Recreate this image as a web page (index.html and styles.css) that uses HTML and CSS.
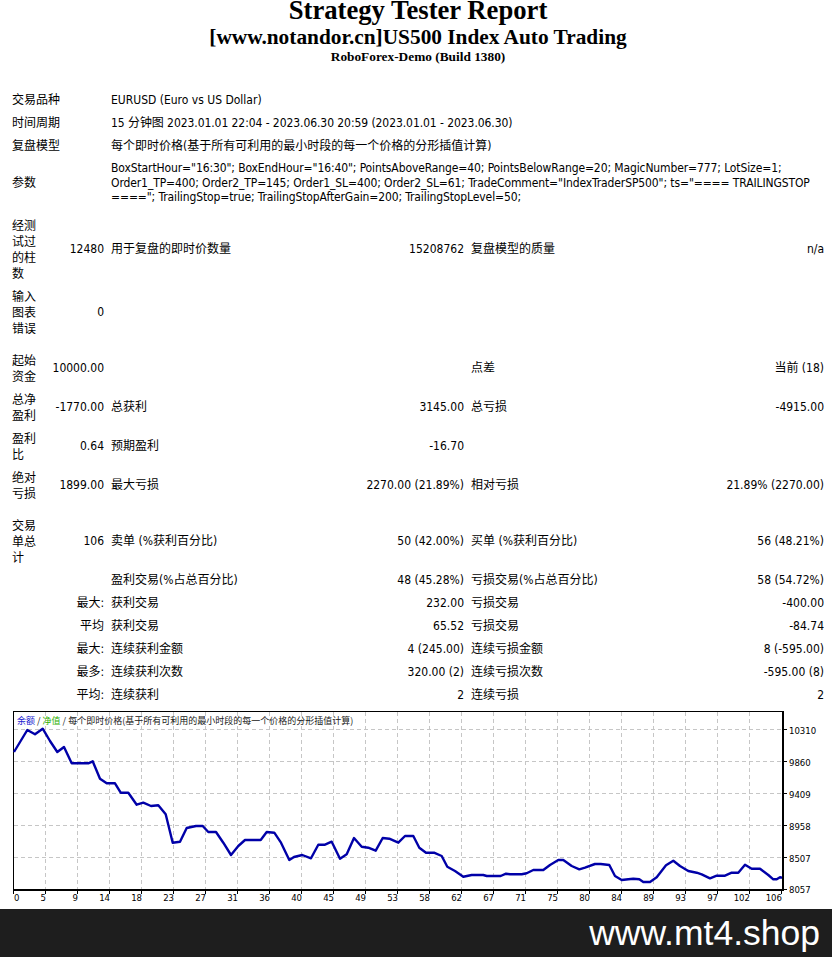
FILE: index.html
```html
<!DOCTYPE html>
<html lang="zh-CN">
<head>
<meta charset="utf-8">
<title>Strategy Tester Report</title>
<link rel="stylesheet" href="styles.css">
</head>
<body>
<div class="page">
  <header class="report-head">
    <div class="title">Strategy Tester Report</div>
    <div class="subtitle">[www.notandor.cn]US500 Index Auto Trading</div>
    <div class="server">RoboForex-Demo (Build 1380)</div>
  </header>

  <table class="stats">
    <colgroup>
      <col class="w1"><col class="w2"><col class="w3"><col class="w4"><col class="w3"><col class="w4">
    </colgroup>
    <tr><td colspan="2">交易品种</td><td colspan="4">EURUSD (Euro vs US Dollar)</td></tr>
    <tr><td colspan="2">时间周期</td><td colspan="4" class="tight">15 分钟图 2023.01.01 22:04 - 2023.06.30 20:59 (2023.01.01 - 2023.06.30)</td></tr>
    <tr><td colspan="2">复盘模型</td><td colspan="4">每个即时价格(基于所有可利用的最小时段的每一个价格的分形插值计算)</td></tr>
    <tr><td colspan="2">参数</td><td colspan="4" class="params">BoxStartHour="16:30"; BoxEndHour="16:40"; PointsAboveRange=40; PointsBelowRange=20; MagicNumber=777; LotSize=1;<br>Order1_TP=400; Order2_TP=145; Order1_SL=400; Order2_SL=61; TradeComment="IndexTraderSP500"; ts="==== TRAILINGSTOP<br>===="; TrailingStop=true; TrailingStopAfterGain=200; TrailingStopLevel=50;</td></tr>
    <tr class="gap-s"><td colspan="6"></td></tr>
    <tr><td class="lbl">经测试过的柱数</td><td class="num">12480</td><td>用于复盘的即时价数量</td><td class="num">15208762</td><td>复盘模型的质量</td><td class="num">n/a</td></tr>
    <tr><td class="lbl">输入图表错误</td><td class="num">0</td><td></td><td></td><td></td><td></td></tr>
    <tr class="gap-l"><td colspan="6"></td></tr>
    <tr><td class="lbl">起始资金</td><td class="num">10000.00</td><td></td><td></td><td>点差</td><td class="num">当前 (18)</td></tr>
    <tr><td class="lbl">总净盈利</td><td class="num">-1770.00</td><td>总获利</td><td class="num">3145.00</td><td>总亏损</td><td class="num">-4915.00</td></tr>
    <tr><td class="lbl">盈利比</td><td class="num">0.64</td><td>预期盈利</td><td class="num">-16.70</td><td></td><td></td></tr>
    <tr><td class="lbl">绝对亏损</td><td class="num">1899.00</td><td>最大亏损</td><td class="num">2270.00 (21.89%)</td><td>相对亏损</td><td class="num">21.89% (2270.00)</td></tr>
    <tr class="gap-l"><td colspan="6"></td></tr>
    <tr><td class="lbl">交易单总计</td><td class="num">106</td><td>卖单 (%获利百分比)</td><td class="num">50 (42.00%)</td><td>买单 (%获利百分比)</td><td class="num">56 (48.21%)</td></tr>
    <tr><td></td><td></td><td>盈利交易(%占总百分比)</td><td class="num">48 (45.28%)</td><td>亏损交易(%占总百分比)</td><td class="num">58 (54.72%)</td></tr>
    <tr><td colspan="2" class="num">最大:</td><td>获利交易</td><td class="num">232.00</td><td>亏损交易</td><td class="num">-400.00</td></tr>
    <tr><td colspan="2" class="num">平均</td><td>获利交易</td><td class="num">65.52</td><td>亏损交易</td><td class="num">-84.74</td></tr>
    <tr><td colspan="2" class="num">最大:</td><td>连续获利金额</td><td class="num">4 (245.00)</td><td>连续亏损金额</td><td class="num">8 (-595.00)</td></tr>
    <tr><td colspan="2" class="num">最多:</td><td>连续获利次数</td><td class="num">320.00 (2)</td><td>连续亏损次数</td><td class="num">-595.00 (8)</td></tr>
    <tr><td colspan="2" class="num">平均:</td><td>连续获利</td><td class="num">2</td><td>连续亏损</td><td class="num">2</td></tr>
  </table>

  <svg class="graph" width="820" height="200" viewBox="8 706 820 200" xmlns="http://www.w3.org/2000/svg">
    <rect x="8" y="706" width="820" height="200" fill="#ffffff"/>
    <path class="grid" d="M45.5 711V888M77.5 711V888M109.5 711V888M141.5 711V888M173.5 711V888M205.5 711V888M237.5 711V888M269.5 711V888M301.5 711V888M333.5 711V888M365.5 711V888M397.5 711V888M429.5 711V888M461.5 711V888M493.5 711V888M525.5 711V888M557.5 711V888M589.5 711V888M621.5 711V888M653.5 711V888M685.5 711V888M717.5 711V888M749.5 711V888M14 728.5H782M14 760.5H782M14 792.5H782M14 824.5H782M14 856.5H782"/>
    <path class="axis" d="M13.5 710.5H782.5M13.5 710V889"/>
    <path class="axis2" d="M783 710V890M13 889H784"/>
    <path class="axis" d="M784 728.5h3M784 760.5h3M784 792.5h3M784 824.5h3M784 856.5h3M784 888.5h3M13.5 890v3M45.5 890v3M77.5 890v3M109.5 890v3M141.5 890v3M173.5 890v3M205.5 890v3M237.5 890v3M269.5 890v3M301.5 890v3M333.5 890v3M365.5 890v3M397.5 890v3M429.5 890v3M461.5 890v3M493.5 890v3M525.5 890v3M557.5 890v3M589.5 890v3M621.5 890v3M653.5 890v3M685.5 890v3M717.5 890v3M749.5 890v3M781.5 890v3"/>
    <polyline class="curve" points="14,751 27.3,729 35,733.3 42.7,727.7 50,740 57.3,751 64,746 71.7,762.3 79,762.3 88.3,762.3 92.7,760.3 100,777.7 106.7,782.3 115,782.3 120.7,791.7 128.3,791.7 136.7,803.7 143.3,801.7 151,805 158.3,804.3 165.7,813.3 172.7,841.7 180,840.7 186.7,827 196,825 202.7,825 208.3,831 216,831 223.3,841.7 231,854 238.3,845 245,839 260.7,839 266.7,831 274.3,831.7 281,841.7 289.3,859 294,856 302.3,854 311,857.3 318.3,843.7 325,843.7 331.7,840.7 340,857.7 346.7,853.3 354,837 361.7,845.7 368.3,846.7 375.7,849.7 382.7,837 389.3,837.7 398.3,841.7 405,835 413.3,835 419.3,846.7 426,851.7 434,851.7 441.7,855 447.3,865.7 455,870 463.3,875.7 471.7,874 483.3,874 486.7,875 500.7,875 506,872.7 510,873.3 521.7,873.3 526.7,872.3 533.3,869 543.3,869 550,864 558.3,859 563.3,859 571.7,865 579.3,868.3 585,866.7 595,863 600.7,863 609.3,864 615,875 621.7,879 628.3,878.3 633.3,877.7 639.3,878.3 643.3,881 650,881 656.7,876.3 666,864.3 673.3,859.7 680,865 688.3,870 696.7,871.7 701.7,873.3 710,877.3 716.7,874.7 725,874.7 731.7,871.7 738.3,871.7 745,863.7 751.7,867.7 760,867.7 768.3,874 773.3,878.3 776.7,878.3 780,876.3 782,876.7"/>
    <text class="legend" x="17" y="722.5"><tspan class="lg-bal">余额</tspan> / <tspan class="lg-eq">净值</tspan> / 每个即时价格(基于所有可利用的最小时段的每一个价格的分形插值计算)</text>
    <g class="ylab">
      <text x="789" y="732.5">10310</text>
      <text x="789" y="764.5">9860</text>
      <text x="789" y="796.5">9409</text>
      <text x="789" y="828.5">8958</text>
      <text x="789" y="860.5">8507</text>
      <text x="789" y="892">8057</text>
    </g>
    <g class="xlab">
      <text x="14" y="900" class="first">0</text>
      <text x="46" y="900">5</text>
      <text x="78" y="900">9</text>
      <text x="110" y="900">14</text>
      <text x="142" y="900">18</text>
      <text x="174" y="900">23</text>
      <text x="206" y="900">27</text>
      <text x="238" y="900">31</text>
      <text x="270" y="900">36</text>
      <text x="302" y="900">40</text>
      <text x="334" y="900">45</text>
      <text x="366" y="900">49</text>
      <text x="398" y="900">53</text>
      <text x="430" y="900">58</text>
      <text x="462" y="900">62</text>
      <text x="494" y="900">67</text>
      <text x="526" y="900">71</text>
      <text x="558" y="900">75</text>
      <text x="590" y="900">80</text>
      <text x="622" y="900">84</text>
      <text x="654" y="900">89</text>
      <text x="686" y="900">93</text>
      <text x="718" y="900">97</text>
      <text x="750" y="900">102</text>
      <text x="782" y="900">106</text>
    </g>
  </svg>
</div>

<footer class="watermark">www.mt4.shop</footer>
</body>
</html>
```

FILE: styles.css
```css
html, body {
  margin: 0;
  padding: 0;
  background: #ffffff;
  color: #000000;
}

body {
  margin: 0 8px;
}

.page {
  width: 820px;
}

.report-head {
  text-align: center;
  font-family: "Liberation Serif", "Times New Roman", serif;
  font-weight: bold;
}

.title {
  font-size: 26.67px;
  line-height: 20px;
}

.subtitle {
  font-size: 21.33px;
  line-height: 24px;
  margin-top: 5px;
}

.server {
  font-size: 13.33px;
  line-height: 14px;
  margin-top: 1px;
}

.stats {
  margin-top: 24px;
  width: 820px;
  border-collapse: separate;
  border-spacing: 1px;
  table-layout: fixed;
  font-family: "DejaVu Sans Condensed", "DejaVu Sans", "Noto Sans CJK SC", sans-serif;
  font-size: 12px;
}

.stats .w1 { width: 32px; }
.stats .w2 { width: 65px; }
.stats .w3 { width: 180px; }
.stats .w4 { width: 178px; }

.stats td {
  padding: 3px;
  line-height: 16px;
  vertical-align: middle;
  text-align: left;
  white-space: normal;
}

.stats td.lbl {
  padding-top: 4px;
  padding-bottom: 2px;
}

.stats td.num {
  text-align: right;
  white-space: nowrap;
}

.stats td.tight {
  letter-spacing: -0.07px;
}

.stats td.params {
  line-height: 14.6px;
  white-space: nowrap;
  letter-spacing: -0.11px;
}

.stats tr.gap-s td {
  padding: 0;
  height: 4px;
  line-height: 0;
}

.stats tr.gap-l td {
  padding: 0;
  height: 8px;
  line-height: 0;
}

.graph {
  display: block;
}

.graph .grid {
  fill: none;
  stroke: #c6c6c6;
  stroke-width: 1;
  stroke-dasharray: 4 3;
}

.graph .axis {
  fill: none;
  stroke: #000000;
  stroke-width: 1;
}

.graph .axis2 {
  fill: none;
  stroke: #000000;
  stroke-width: 2;
}

.graph .curve {
  fill: none;
  stroke: #0000a8;
  stroke-width: 2.4;
  stroke-linejoin: round;
}

.graph .legend {
  font-family: "Noto Sans CJK SC", "DejaVu Sans", sans-serif;
  font-size: 9px;
  fill: #202020;
}

.graph .lg-bal {
  fill: #2020d0;
}

.graph .lg-eq {
  fill: #30b000;
}

.graph .ylab text,
.graph .xlab text {
  font-family: "DejaVu Sans Condensed", "DejaVu Sans", sans-serif;
  font-size: 9.5px;
  fill: #000000;
}

.graph .xlab text {
  text-anchor: end;
}

.graph .xlab text.first {
  text-anchor: start;
}

.watermark {
  position: fixed;
  left: 0;
  right: 0;
  bottom: 0;
  height: 48px;
  background: #1e1e1e;
  color: #ffffff;
  font-family: "Liberation Sans", Arial, sans-serif;
  font-size: 35.5px;
  line-height: 48px;
  text-align: right;
  padding-right: 12px;
}
```
